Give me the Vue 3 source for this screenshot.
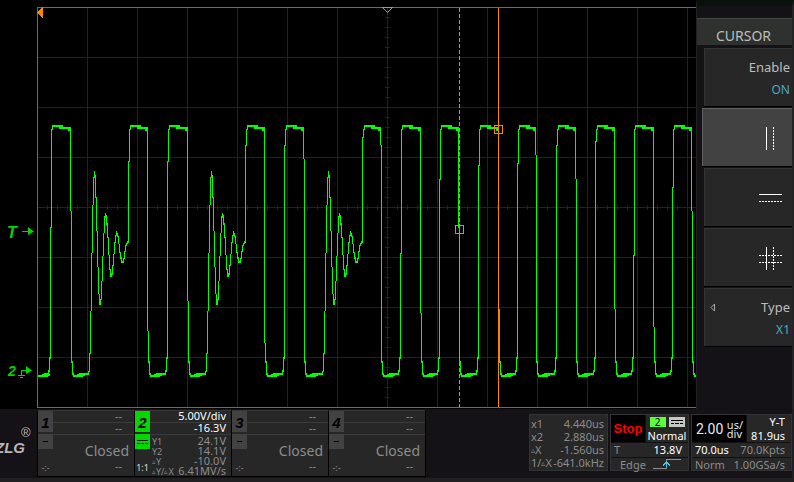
<script setup>
import { ref } from 'vue';

const activeMode = ref('x');

// Grid: one division is 50 units, ticks every 10
const gridX = Array.from({ length: 13 }, (_, i) => 87 + i * 50);
const gridY = Array.from({ length: 7 }, (_, i) => 57 + i * 50);
const ticksX = Array.from({ length: 65 }, (_, i) => 47 + i * 10);
const ticksY = Array.from({ length: 39 }, (_, i) => 17 + i * 10);

// rise column, y where the rise steps, fall column, y where the fall steps
const pulses = [
    { rise: 51, riseStep: 227, fall: 70, fallStep: 211 },
    { rise: 129, riseStep: 161, fall: 147, fallStep: 331, ringBefore: true },
    { rise: 168, riseStep: 161, fall: 187, fallStep: 301 },
    { rise: 246, riseStep: 145, fall: 264, fallStep: 343, ringBefore: true },
    { rise: 285, riseStep: 145, fall: 303, fallStep: 159 },
    { rise: 363, riseStep: 137, fall: 380, fallStep: 145, ringBefore: true },
    { rise: 401, riseStep: 253, fall: 420, fallStep: 313 },
    { rise: 440, riseStep: 179, fall: 458, fallStep: 228 },
    { rise: 479, riseStep: 165, fall: 498, fallStep: 309 },
    { rise: 518, riseStep: 163, fall: 535, fallStep: 155 },
    { rise: 557, riseStep: 145, fall: 575, fallStep: 179 },
    { rise: 596, riseStep: 141, fall: 614, fallStep: 309 },
    { rise: 634, riseStep: 255, fall: 653, fallStep: 327 },
    { rise: 673, riseStep: 187, fall: 691, fallStep: 211 },
];

// Ringing, one [top, bottom] pair per column
const ring = [
    [371, 374], [353, 372], [311, 354], [253, 311], [205, 253], [177, 205], [171, 178],
    [175, 198], [197, 231], [231, 267], [267, 294], [294, 305], [299, 305], [281, 300],
    [256, 281], [233, 256], [216, 233], [213, 218], [215, 225], [223, 238], [237, 255],
    [255, 270], [269, 277], [273, 277], [265, 275], [254, 266], [242, 254], [235, 243],
    [231, 236], [233, 237], [236, 244], [244, 253], [252, 259], [257, 263], [261, 263],
    [258, 263], [251, 259], [245, 252], [243, 246], [241, 244],
];

const block = (x, y, right, bottom) => `M${x} ${y}H${right}V${bottom}H${x}Z`;

const buildTrace = () => {
    const parts = [];
    let low = 38;
    pulses.forEach(({ rise, riseStep, fall, fallStep, ringBefore }) => {
        const lowEnd = ringBefore ? rise - 40 : rise - 3;
        parts.push(block(low, 375, low + 10, 377), block(low + 6, 373, lowEnd, 375));
        parts.push(block(low + 4, 374, low + 12, 376));
        if (ringBefore) {
            ring.forEach(([top, bottom], i) => {
                const x = rise - 41 + i;
                parts.push(block(x, top, x + 1, bottom));
            });
            parts.push(block(rise - 1, riseStep, rise, 243));
        } else {
            parts.push(block(rise - 3, 370, rise - 2, 375), block(rise - 2, 357, rise - 1, 372));
            parts.push(block(rise - 1, riseStep, rise, 359));
        }
        parts.push(block(rise, 129, rise + 1, riseStep + 1));
        // flat top sags slightly before the fall
        parts.push(block(rise + 1, 125, rise + 12, 127), block(rise + 1, 127, rise + 2, 130));
        parts.push(block(rise + 8, 127, fall + 1, 129), block(fall - 2, 129, fall + 1, 131));
        parts.push(block(fall, 128, fall + 1, fallStep));
        parts.push(block(fall + 1, fallStep, fall + 2, 363), block(fall + 2, 361, fall + 3, 374));
        low = fall + 3;
        parts.push(block(low - 1, 373, low + 1, 375));
    });
    parts.push(block(694, 375, 696, 377));
    return parts.join('');
};

const trace = buildTrace();

const channels = [
    { id: 1, open: false },
    {
        id: 2,
        open: true,
        scale: '5.00V/div',
        offset: '-16.3V',
        rows: [['Y1', '24.1V'], ['Y2', '14.1V'], ['▵Y', '-10.0V'], ['▵Y/▵X', '6.41MV/s']],
    },
    { id: 3, open: false },
    { id: 4, open: false },
];

const cursors = [
    ['x1', '4.440us'],
    ['x2', '2.880us'],
    ['▵X', '-1.560us'],
    ['1/▵X', '-641.0kHz'],
];

// The delta sign is set smaller than the letters round it
const pieces = (name) => name.split(/(▵)/).filter(Boolean);
</script>

<template>
    <div class="scope">
        <main class="display">
            <svg class="plot" viewBox="0 0 696 409" shape-rendering="crispEdges" role="img" aria-label="Waveform">
                <!-- Grid -->
                <g fill="#222222">
                    <rect v-for="x in gridX" :key="'gx' + x" :x="x" y="8" width="1" height="399" />
                    <rect v-for="y in gridY" :key="'gy' + y" x="38" :y="y" width="658" height="1" />
                    <rect v-for="x in ticksX" :key="'tx' + x" :x="x" y="205" width="1" height="5" />
                    <rect v-for="y in ticksY" :key="'ty' + y" x="385" :y="y" width="5" height="1" />
                </g>
                <path d="M696 7.5H37.500V407.500H696" fill="none" stroke="#6b6b6b" />

                <!-- Trace -->
                <path :d="trace" fill="#00ff00" />

                <!-- Cursors -->
                <g fill="none" stroke="#ff8400">
                    <path d="M459.500 8V407" stroke-dasharray="4 2" />
                    <path d="M498.500 8V407" />
                    <rect x="455.500" y="225.500" width="8" height="8" />
                    <rect x="494.500" y="125.500" width="8" height="8" />
                    <path d="M382 7.500H393M383 8L387.500 12.500L392 8" />
                </g>
                <path d="M37 12.500L43 7V18Z" fill="#ff8400" />

                <!-- Trigger and ground markers -->
                <g fill="#00d800" shape-rendering="auto">
                    <text class="marker" x="7" y="238" font-size="16">T</text>
                    <path d="M22 231H28V227L34 231.500L28 235V232H22Z" />
                    <text class="marker" x="8" y="376" font-size="14">2</text>
                    <path d="M21 370H26V366L32 370.500L26 374V371H22V375H25V376H18V375H21ZM20 377H23V378H20Z" />
                </g>
            </svg>

            <aside class="menu">
                <h1 class="menu-title">CURSOR</h1>
                <button class="item" type="button">
                    <span>Enable</span>
                    <span class="value">ON</span>
                </button>
                <button class="item" :class="{ active: activeMode === 'x' }" type="button" aria-label="X cursors"
                    @click="activeMode = 'x'">
                    <svg class="mode" viewBox="0 0 24 24" shape-rendering="crispEdges">
                        <path d="M8.500 0V23" />
                        <path d="M15.500 0V23" stroke-dasharray="2 1" />
                    </svg>
                </button>
                <button class="item" :class="{ active: activeMode === 'y' }" type="button" aria-label="Y cursors"
                    @click="activeMode = 'y'">
                    <svg class="mode" viewBox="0 0 24 24" shape-rendering="crispEdges">
                        <path d="M1 7.500H24" />
                        <path d="M1 14.500H24" stroke-dasharray="2 1" />
                    </svg>
                </button>
                <button class="item" :class="{ active: activeMode === 'xy' }" type="button" aria-label="XY cursors"
                    @click="activeMode = 'xy'">
                    <svg class="mode" viewBox="0 0 24 24" shape-rendering="crispEdges">
                        <path d="M8.500 0V23" />
                        <path d="M15.500 0V23M1 8.500H24M1 15.500H24" stroke-dasharray="2 1" />
                    </svg>
                </button>
                <button class="item" type="button">
                    <span class="type">
                        <svg class="caret" viewBox="0 0 6 9"><path d="M4.500 1L1 4.500L4.500 8Z" /></svg>
                        Type
                    </span>
                    <span class="value">X1</span>
                </button>
            </aside>
        </main>

        <footer class="status">
            <svg class="logo" viewBox="0 0 37 67" role="img" aria-label="ZLG">
                <text class="marker" x="-5" y="43" fill="#b8b8b8" font-size="15">ZLG</text>
                <text class="registered" x="21" y="27" fill="#b8b8b8" font-size="13">®</text>
            </svg>

            <div class="channels">
                <section v-for="ch in channels" :key="ch.id" class="channel" :class="{ open: ch.open }">
                    <div class="tabs">
                        <b class="number">{{ ch.id }}</b>
                        <span class="coupling">
                            <svg viewBox="0 0 15 15" shape-rendering="crispEdges">
                                <path v-if="ch.open" d="M2 6.500H13M2 9.500H5M6 9.500H9M10 9.500H13" />
                                <path v-else d="M5 7.500H10" />
                            </svg>
                        </span>
                        <span class="ratio">{{ ch.open ? '1:1' : '-:-' }}</span>
                    </div>
                    <div class="readings">
                        <div class="line">{{ ch.open ? ch.scale : '--' }}</div>
                        <div class="line">{{ ch.open ? ch.offset : '--' }}</div>
                        <dl v-if="ch.open" class="measures">
                            <div v-for="[name, value] in ch.rows" :key="name">
                                <dt>
                                    <span v-for="(part, i) in pieces(name)" :key="i"
                                        :class="{ delta: part === '▵' }">{{ part }}</span>
                                </dt>
                                <dd>{{ value }}</dd>
                            </div>
                        </dl>
                        <div v-else class="closed">
                            <span>Closed</span>
                            <small>--</small>
                        </div>
                    </div>
                </section>
            </div>

            <div class="readouts">
                <dl class="box cursors">
                    <div v-for="[name, value] in cursors" :key="name">
                        <dt>
                            <span v-for="(part, i) in pieces(name)" :key="i" :class="{ delta: part === '▵' }">{{ part }}</span>
                        </dt>
                        <dd>{{ value }}</dd>
                    </div>
                </dl>

                <section class="box trigger">
                    <div class="top">
                        <strong class="stop">Stop</strong>
                        <div class="mode-info">
                            <div class="badges">
                                <span class="source">2</span>
                                <svg class="dc" viewBox="0 0 16 10" shape-rendering="crispEdges">
                                    <path d="M2 3.500H14M2 6.500H5M6 6.500H10M11 6.500H14" />
                                </svg>
                            </div>
                            <span class="bright">Normal</span>
                        </div>
                    </div>
                    <div class="row"><span>T</span><span class="bright">13.8V</span></div>
                    <div class="row edge">
                        <span>Edge</span>
                        <svg class="slope" viewBox="0 0 30 12" shape-rendering="crispEdges">
                            <path d="M1 10.500H14.500V1.500H29" stroke="#8c8c8c" />
                            <path d="M11 7.500L14.500 4L18 7.500M14.500 4V9" stroke="#4cc3e8" />
                        </svg>
                    </div>
                </section>

                <section class="box timebase">
                    <div class="top">
                        <div class="scale">
                            <span class="number">2.00</span>
                            <span class="unit"><span>us/</span><span>div</span></span>
                        </div>
                        <div class="view bright"><span>Y-T</span><span>81.9us</span></div>
                    </div>
                    <div class="row"><span class="bright">70.0us</span><span>70.0Kpts</span></div>
                    <div class="row"><span>Norm</span><span>1.00GSa/s</span></div>
                </section>
            </div>
        </footer>
    </div>
</template>

<style>
body {
    margin: 0;
    background: #141216;
}
</style>

<style scoped>
.scope {
    min-height: 100vh;
    display: flex;
    flex-direction: column;
    background: #141216;
    color: #8c8c8c;
    font: 11px/13px "Noto Sans", sans-serif;
}

.scope * {
    box-sizing: border-box;
}

.display {
    display: flex;
    background: #000;
}

.plot {
    flex: 1;
    min-width: 0;
    display: block;
}

.marker {
    font-family: "Liberation Sans", sans-serif;
    font-weight: bold;
    font-style: italic;
}

.registered {
    font-family: "Liberation Sans", sans-serif;
}

/* Side menu */
.menu {
    width: 98px;
    flex: none;
    display: flex;
    flex-direction: column;
    align-items: flex-end;
    gap: 2px;
    border-top: 6px solid #09110b;
    border-left: 1px solid #242126;
    border-right: 2px solid #242326;
    background: #141216;
}

.menu-title {
    align-self: stretch;
    margin: 12px 0 1px;
    padding-right: 2px;
    height: 27px;
    border-top: 1px solid #444744;
    background: #2e312e;
    color: #bdbdbd;
    font-size: 14px;
    font-weight: 400;
    line-height: 34px;
    text-align: center;
}

.item {
    width: 88px;
    height: 58px;
    display: flex;
    flex-direction: column;
    align-items: flex-end;
    justify-content: center;
    gap: 3px;
    padding: 2px 2px 0 5px;
    border: 0;
    border-top: 1px solid #353535;
    border-left: 1px solid #353535;
    border-radius: 0;
    background: #272727;
    box-shadow: 0 1px #000;
    color: #bdbdbd;
    font: 13px/20px "Noto Sans", sans-serif;
}

.item.active {
    width: 90px;
    border-color: #606060;
    background: #424242;
}

.value {
    color: #49a9c6;
    font-size: 12px;
}

.type {
    width: 100%;
    display: flex;
    align-items: center;
    justify-content: space-between;
}

.caret {
    width: 6px;
    height: 9px;
    fill: none;
    stroke: #a8a8a8;
}

.mode {
    width: 24px;
    height: 24px;
    margin-right: 8px;
    fill: none;
    stroke: #fff;
}

/* Bottom bar */
.status {
    display: flex;
    align-items: flex-start;
    padding-top: 1px;
    border-right: 2px solid #221f23;
    border-bottom: 4px solid #221f23;
    flex: 1;
}

.logo {
    width: 37px;
    height: 67px;
    flex: none;
}

.channels {
    display: flex;
    border-right: 1px solid #000;
}

.channel {
    width: 97px;
    height: 67px;
    display: flex;
    border: 1px solid #000;
    border-top-color: #353535;
    border-right: 0;
    background: #272727;
}

.tabs {
    width: 15px;
    flex: none;
    display: flex;
    flex-direction: column;
    gap: 2px;
}

.tabs .number {
    height: 21px;
    background: #424242;
    color: #000;
    font: italic bold 15px/24px "Liberation Sans", sans-serif;
    text-align: center;
}

.coupling {
    height: 15px;
    background: #424242;
}

.coupling svg {
    display: block;
    fill: none;
    stroke: #000;
}

.open .number,
.open .coupling {
    background: #00d800;
}

.ratio {
    margin-top: auto;
    padding-bottom: 2px;
    font-size: 9px;
    text-align: center;
}

.open .ratio {
    color: #ddd;
}

.readings {
    flex: 1;
    min-width: 0;
    display: flex;
    flex-direction: column;
}

.line {
    height: 12px;
    padding-right: 12px;
    border-bottom: 1px solid #3b3b3b;
    line-height: 10px;
    text-align: right;
}

.open .line {
    padding-right: 5px;
    color: #fff;
}

.closed {
    flex: 1;
    display: flex;
    flex-direction: column;
    align-items: flex-end;
    padding: 6px 5px 0 0;
    font-size: 14px;
    line-height: 19px;
}

.closed small {
    padding-right: 7px;
    font-size: 11px;
    line-height: 11px;
}

dl,
dd {
    margin: 0;
}

dl > div {
    display: flex;
    justify-content: space-between;
    white-space: nowrap;
}

.delta {
    font-size: 8px;
}

/* a smaller delta must not make its row taller */
dt,
.delta {
    line-height: 1px;
}

dt {
    display: flex;
    align-items: center;
}

.measures {
    padding: 1px 5px 0 2px;
    line-height: 10px;
}

.measures dt {
    font-size: 9px;
}

.measures .delta {
    font-size: 7px;
}

.readouts {
    display: flex;
    gap: 2px;
    margin-left: auto;
    padding-top: 4px;
}

.box {
    height: 57px;
    border: 1px solid #333;
    background: #272727;
}

.bright {
    color: #fff;
}

.cursors {
    width: 79px;
    padding: 2px 3px 0 1px;
}

.trigger {
    width: 79px;
}

.top {
    height: 28px;
    display: flex;
    border-bottom: 1px solid #111;
}

.stop {
    width: 34px;
    background: #000;
    color: #f00;
    font: bold 13px/28px "Liberation Sans", sans-serif;
    text-align: center;
}

.mode-info {
    flex: 1;
    display: flex;
    flex-direction: column;
    justify-content: space-between;
    align-items: center;
    padding-top: 2px;
    border-left: 1px solid #111;
}

.badges {
    display: flex;
    gap: 3px;
}

.source {
    width: 16px;
    height: 10px;
    background: #5cff3c;
    color: #000;
    font-size: 10px;
    line-height: 10px;
    text-align: center;
}

.dc {
    width: 16px;
    height: 10px;
    background: #c4c8c4;
    fill: none;
    stroke: #000;
}

.row {
    height: 14px;
    display: flex;
    justify-content: space-between;
    padding: 0 6px 0 3px;
}

.row + .row {
    border-top: 1px solid #111;
}

.edge {
    padding-left: 9px;
}

.slope {
    width: 30px;
    height: 12px;
    fill: none;
}

.timebase {
    width: 101px;
}

.scale {
    width: 54px;
    display: flex;
    align-items: center;
    justify-content: space-between;
    padding: 0 3px 0 4px;
    background: #000;
    color: #e8e8e8;
}

.scale .number {
    font: 14px/20px Roboto, sans-serif;
}

.unit {
    display: flex;
    flex-direction: column;
    line-height: 9px;
}

.view {
    flex: 1;
    display: flex;
    flex-direction: column;
    justify-content: space-between;
    align-items: flex-end;
    padding-right: 6px;
    border-left: 1px solid #111;
}
</style>
